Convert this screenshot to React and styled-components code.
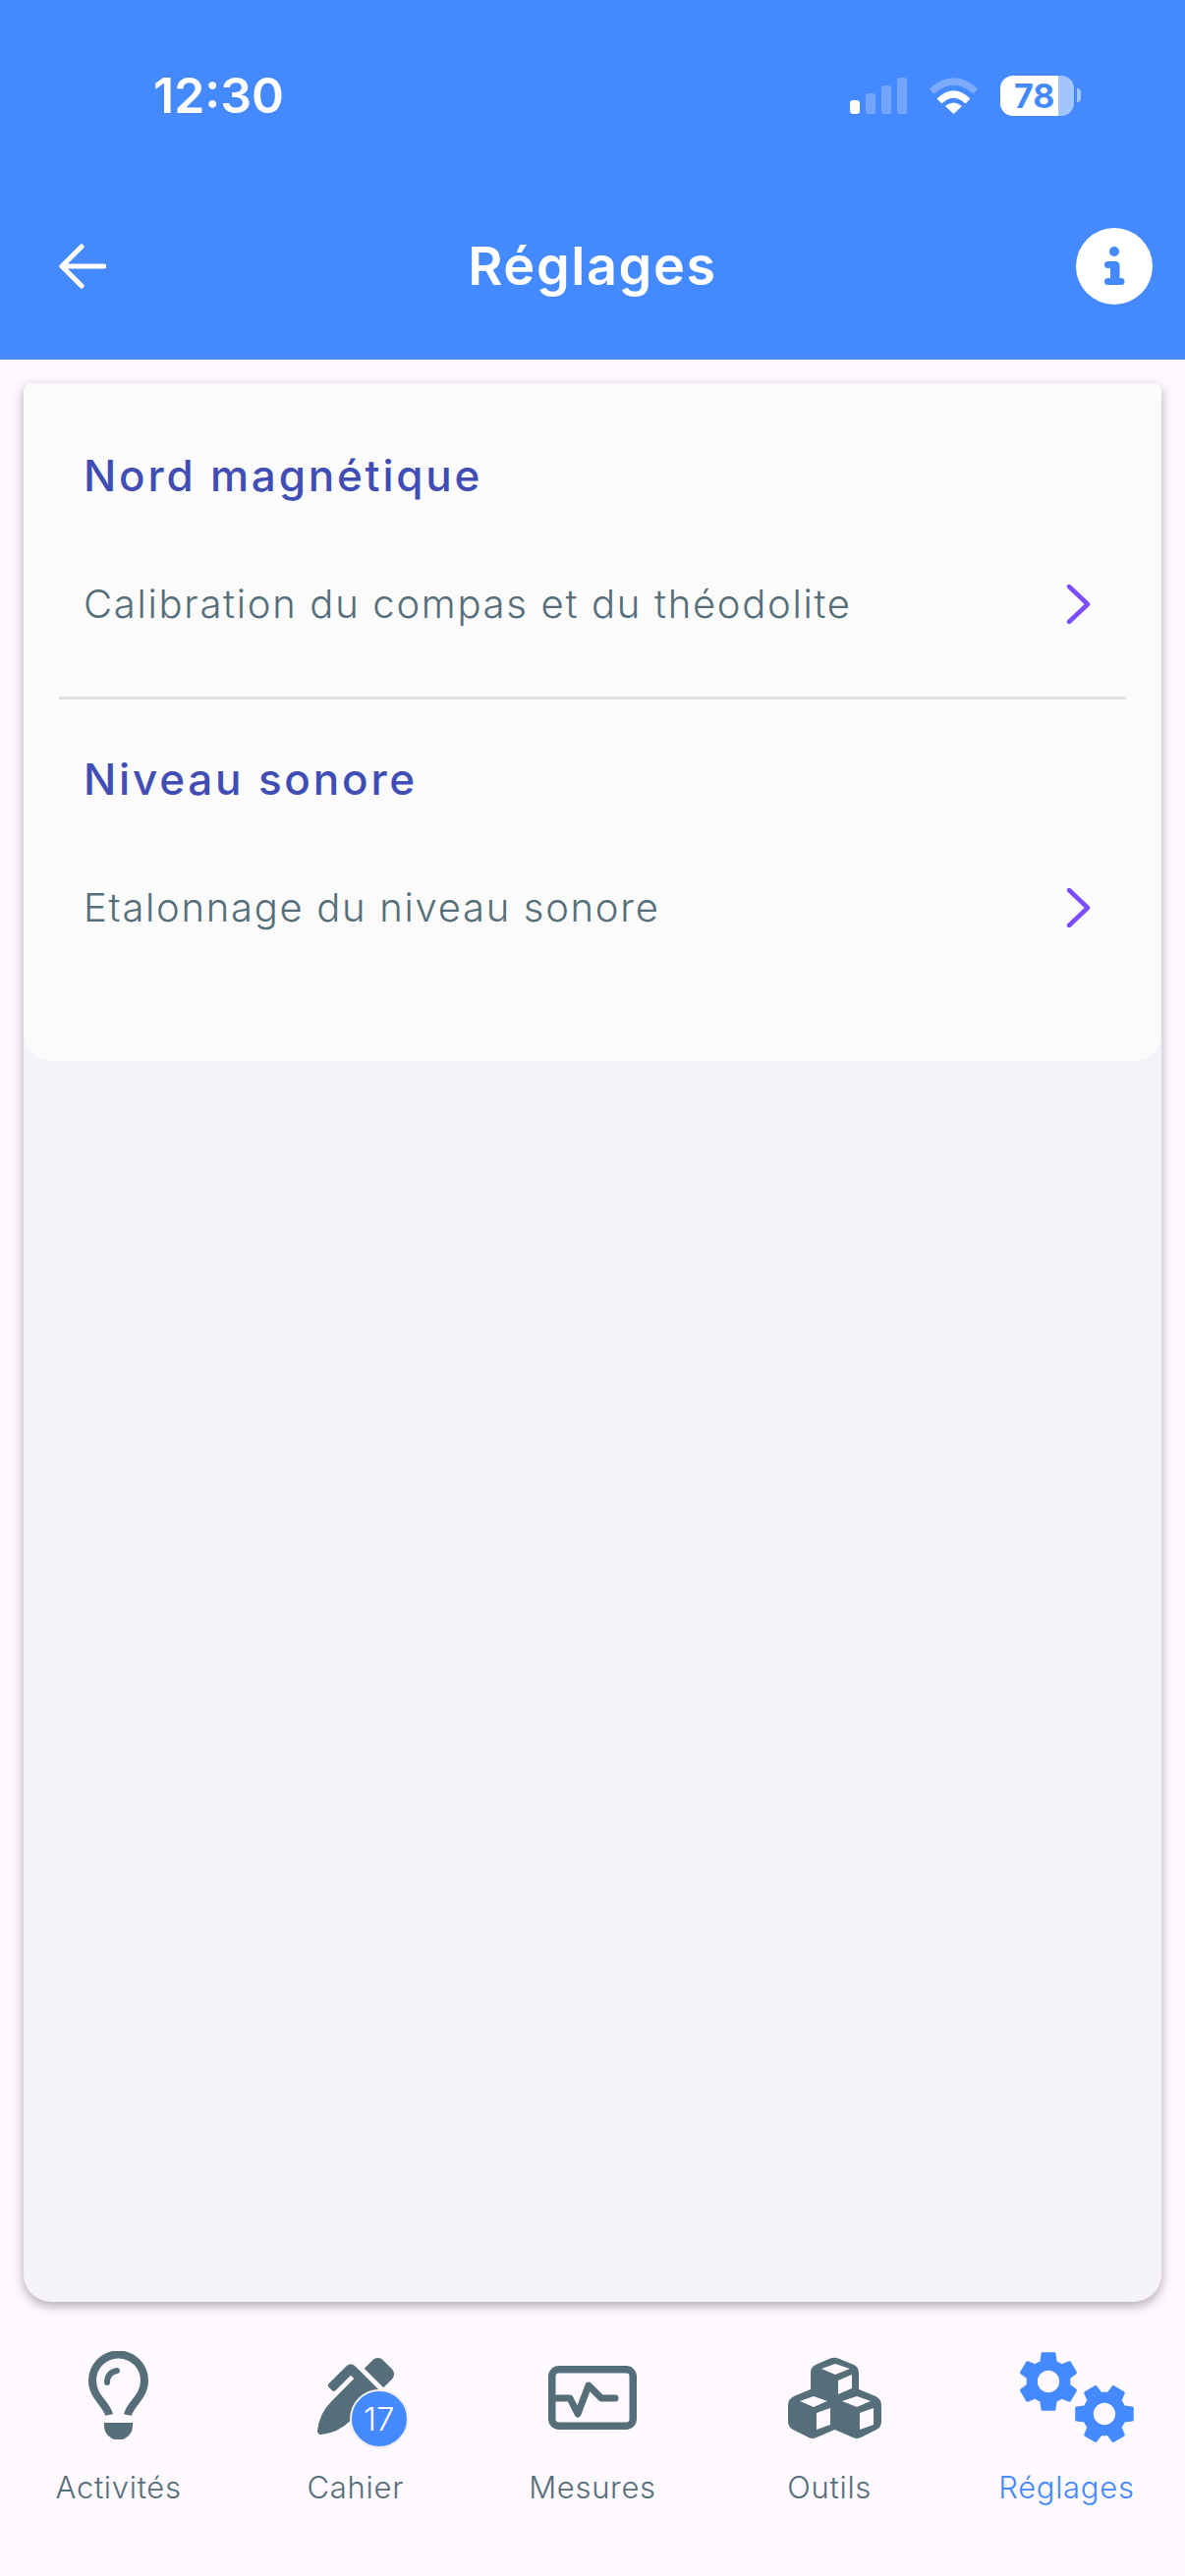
import React from "react";
import styled, { createGlobalStyle } from "styled-components";
import { FaPenAlt } from "react-icons/fa";

const Global = createGlobalStyle`
  html, body { margin: 0; padding: 0; background: #FEF8FF; }
  * { box-sizing: border-box; }
`;
const font = `"Inter", "Open Sans", sans-serif`;
const slate = "#566E7A";
const blue = "#4589FF";

const Page = styled.div`
  width: 1206px; height: 2622px; display: flex; flex-direction: column;
  background: #FEF8FF; font-family: ${font}; overflow: hidden;
`;
const Header = styled.header`
  height: 366px; flex: none; background: ${blue}; padding-top: 72px; color: #fff;
  position: relative; z-index: 1;
`;
const StatusBar = styled.div`
  height: 50px; display: flex; align-items: center; justify-content: space-between;
  padding: 0 106px 0 156px;
`;
const Time = styled.span`
  font-family: "Inter", sans-serif; font-weight: 600; font-size: 50px; letter-spacing: 0; line-height: 50px;
`;
const StatusIcons = styled.div`
  display: flex; align-items: center;
`;
const Battery = styled.div`
  width: 75px; height: 41px; margin-left: 22px; border-radius: 13px; overflow: hidden;
  background: linear-gradient(90deg, #fff 0 59px, #A2C4FF 59px);
  color: ${blue}; font-family: "Inter", sans-serif; font-weight: 700; font-size: 34px; line-height: 41px;
  padding-left: 14px;
`;
const BatteryNub = styled.div`
  width: 4px; height: 14px; margin-left: 3px; border-radius: 0 7px 7px 0; background: #A2C4FF;
`;
const TitleRow = styled.div`
  margin-top: 110px; height: 78px; display: grid; grid-template-columns: 1fr auto 1fr; align-items: center;
  padding: 0 33px;
`;
const BackIcon = styled.svg`
  width: 48px; height: 46px; margin-left: 27px; display: block;
`;
const Title = styled.h1`
  margin: 0; font-size: 54px; font-weight: 600; line-height: 78px; color: #fff; letter-spacing: 1.6px;
`;
const InfoIcon = styled.svg`
  width: 78px; height: 78px; justify-self: end; display: block;
`;
const Main = styled.main`
  flex: 1; display: flex; flex-direction: column; padding: 24px 24px 0;
`;
const Card = styled.section`
  height: 1953px; background: #F6F2F9; border-radius: 8px 8px 28px 28px;
  box-shadow: 0 4px 11px rgba(40, 30, 50, 0.36);
`;
const Panel = styled.div`
  height: 690px; background: #FBFBFB; border-radius: 8px 8px 28px 28px; padding: 0 36px;
`;
const Section = styled.div`
  padding: ${p => p.$top}px 0 0;
  height: ${p => p.$h}px;
  border-bottom: ${p => (p.$divider ? "3px solid #E1E2E2" : "none")};
`;
const Heading = styled.h2`
  margin: 0; padding-left: 25px; font-size: 44px; line-height: 56px; font-weight: 500; color: #3F4DB5; letter-spacing: 2.8px;
`;
const Row = styled.div`
  margin-top: 75px; height: 56px; display: flex; align-items: center; justify-content: space-between;
  padding: 0 36px 0 25px;
`;
const RowText = styled.span`
  font-size: 40px; font-weight: 300; color: ${slate}; letter-spacing: 1.7px; line-height: 56px;
`;
const Chevron = styled.svg`
  width: 25px; height: 40px; display: block;
`;
const Footer = styled.nav`
  display: grid; grid-template-columns: repeat(5, 1fr); padding-top: 47px; flex: 1;
`;
const NavItem = styled.div`
  display: flex; flex-direction: column; align-items: center;
`;
const IconSlot = styled.div`
  height: 100px; width: 100%; display: flex; justify-content: center; align-items: flex-start;
  padding-top: ${p => p.$top}px; color: ${p => (p.$active ? blue : slate)};
  transform: translateX(${p => p.$nudge || 0}px);
`;
const PenWrap = styled.div`
  position: relative; width: 78px; height: 78px;
  & > svg { display: block; width: 78px; height: 78px; }
`;
const Badge = styled.span`
  position: absolute; left: 33px; top: 32px; width: 60px; height: 60px; border-radius: 50%;
  background: ${blue}; border: 2.5px solid #F1EEF2; color: #fff; font-size: 33px; font-weight: 300;
  display: flex; align-items: center; justify-content: center; font-family: ${font};
`;
const NavLabel = styled.span`
  margin-top: 22px; font-size: 31px; line-height: 40px; font-weight: 300; letter-spacing: 0.7px;
  color: ${p => (p.$active ? blue : slate)};
`;
const PlainIcon = styled.svg`
  display: block;
`;
const gear = "M19.14 12.94c.04-.3.06-.61.06-.94 0-.32-.02-.64-.07-.94l2.03-1.58c.18-.14.23-.41.12-.61l-1.92-3.32c-.12-.22-.37-.29-.59-.22l-2.39.96c-.5-.38-1.03-.7-1.62-.94l-.36-2.54c-.04-.24-.24-.41-.48-.41h-3.84c-.24 0-.43.17-.47.41l-.36 2.54c-.59.24-1.13.57-1.62.94l-2.39-.96c-.22-.08-.47 0-.59.22L2.74 8.87c-.12.21-.08.47.12.61l2.03 1.58c-.05.3-.09.63-.09.94s.02.64.07.94l-2.03 1.58c-.18.14-.23.41-.12.61l1.92 3.32c.12.22.37.29.59.22l2.39-.96c.5.38 1.03.7 1.62.94l.36 2.54c.05.24.24.41.48.41h3.84c.24 0 .44-.17.47-.41l.36-2.54c.59-.24 1.13-.56 1.62-.94l2.39.96c.22.08.47 0 .59-.22l1.92-3.32c.12-.22.07-.47-.12-.61l-2.01-1.58zM12 15.6c-1.98 0-3.6-1.62-3.6-3.6s1.62-3.6 3.6-3.6 3.6 1.62 3.6 3.6-1.62 3.6-3.6 3.6z";

const cubes = [
  "M43 2.5 Q47 1 51 2.5 L67 9 Q72 11.5 72 17 V34 L89 41 Q95 44 95 50 V67 Q95 72 90 75 L74 83 Q70 85 66 83 L47.5 75 L29 83 Q25 85 21 83 L5 75 Q0 72 0 67 V50 Q0 44 6 41 L23 34 V17 Q23 11.5 28 9 Z",
  "M34 13 L48 8 L63 13 L48 19 Z",
  "M51 25 L65 19 V33 L51 39 Z",
  "M12 46 L26 41 L40 46 L26 52 Z",
  "M29 58 L43 53 V70 L29 75 Z",
  "M55 46 L70 41 L84 46 L70 52 Z",
  "M73 58 L87 53 V70 L73 75 Z",
].join(" ");

const ChevronRight = () => (
  <Chevron viewBox="0 0 25 40" fill="none" stroke="#7C4DFF" strokeWidth="4.5" strokeLinecap="round" strokeLinejoin="round">
    <path d="M3 2 L22 20 L3 38" />
  </Chevron>
);

const Setting = ({ title, label, top, h, divider }) => (
  <Section $top={top} $h={h} $divider={divider}>
    <Heading>{title}</Heading>
    <Row><RowText>{label}</RowText><ChevronRight /></Row>
  </Section>
);

export default function App() {
  return (
    <Page>
      <Global />
      <Header>
        <StatusBar>
          <Time>12:30</Time>
          <StatusIcons>
            <PlainIcon width="58" height="37" viewBox="0 0 58 37">
              <rect x="0" y="23" width="10" height="14" rx="3" fill="#fff" />
              <rect x="16" y="16" width="10" height="21" rx="3" fill="#fff" opacity=".25" />
              <rect x="32" y="8" width="10" height="29" rx="3" fill="#fff" opacity=".25" />
              <rect x="48" y="0" width="10" height="37" rx="3" fill="#fff" opacity=".25" />
            </PlainIcon>
            <PlainIcon width="51" height="37" viewBox="0 0 51 37" style={{ marginLeft: 22 }} fill="none">
              <path d="M3 14 Q25.5 -6 48 14" stroke="#fff" strokeWidth="7" opacity=".3" />
              <path d="M11 24 Q25.5 10 40 24" stroke="#fff" strokeWidth="7" />
              <path d="M25.5 37 L17 29 Q25.5 22 34 29 Z" fill="#fff" />
            </PlainIcon>
            <Battery>78</Battery>
            <BatteryNub />
          </StatusIcons>
        </StatusBar>
        <TitleRow>
          <BackIcon viewBox="0 0 48 46" fill="none" stroke="#fff" strokeWidth="5" strokeLinecap="round" strokeLinejoin="round">
            <path d="M46 23 H3 M23 3 L3 23 L23 43" />
          </BackIcon>
          <Title>Réglages</Title>
          <InfoIcon viewBox="0 0 78 78">
            <circle cx="39" cy="39" r="39" fill="#fff" />
            <circle cx="39" cy="24" r="5" fill={blue} />
            <path d="M32.5 34 H40 A4 4 0 0 1 44.5 38 V51 H46 A3.5 3.5 0 0 1 46 58 H32.5 A3.5 3.5 0 0 1 32.5 51 H35 V41 H32.5 A3.5 3.5 0 0 1 32.5 34 Z" fill={blue} />
          </InfoIcon>
        </TitleRow>
      </Header>
      <Main>
        <Card>
          <Panel>
            <Setting title="Nord magnétique" label="Calibration du compas et du théodolite" top={66} h={322} divider />
            <Setting title="Niveau sonore" label="Etalonnage du niveau sonore" top={53} h={368} />
          </Panel>
        </Card>
      </Main>
      <Footer>
        <NavItem>
          <IconSlot $top={3}>
            <PlainIcon width="61" height="90" viewBox="0 0 61 90" fill="none">
              <path d="M21 65 C19 54 4 47 4 30 A26.5 26.5 0 0 1 57 30 C57 47 42 54 40 65" stroke={slate} strokeWidth="8" />
              <path d="M16 73 H45 V76 A14.5 14.5 0 0 1 16 76 Z" fill={slate} />
              <path d="M19 32 C19 25 23 21 29 20" stroke={slate} strokeWidth="6" strokeLinecap="round" />
            </PlainIcon>
          </IconSlot>
          <NavLabel>Activités</NavLabel>
        </NavItem>
        <NavItem>
          <IconSlot $top={10}>
            <PenWrap>
              <FaPenAlt />
              <Badge>17</Badge>
            </PenWrap>
          </IconSlot>
          <NavLabel>Cahier</NavLabel>
        </NavItem>
        <NavItem>
          <IconSlot $top={18}>
            <PlainIcon width="90" height="65" viewBox="0 0 90 65" fill="none" stroke={slate} strokeWidth="7" strokeLinecap="round" strokeLinejoin="round">
              <rect x="3.75" y="3.75" width="82.5" height="57.5" rx="7" strokeWidth="7.5" />
              <path d="M6 33 H22 L30 49 L41 20 L54 33 H68" />
            </PlainIcon>
          </IconSlot>
          <NavLabel>Mesures</NavLabel>
        </NavItem>
        <NavItem>
          <IconSlot $top={8} $nudge={5}>
            <PlainIcon width="95" height="85" viewBox="0 0 95 85" fill="currentColor" fillRule="evenodd">
              <path d={cubes} />
            </PlainIcon>
          </IconSlot>
          <NavLabel>Outils</NavLabel>
        </NavItem>
        <NavItem>
          <IconSlot $top={2} $nudge={11} $active>
            <PlainIcon width="119" height="94" viewBox="0 0 119 94" fill="currentColor">
              <g transform="translate(-7.2 -5.2) scale(3.1)"><path d={gear} /></g>
              <g transform="translate(87 65) rotate(90) scale(3.1) translate(-12 -12)"><path d={gear} /></g>
            </PlainIcon>
          </IconSlot>
          <NavLabel $active>Réglages</NavLabel>
        </NavItem>
      </Footer>
    </Page>
  );
}
